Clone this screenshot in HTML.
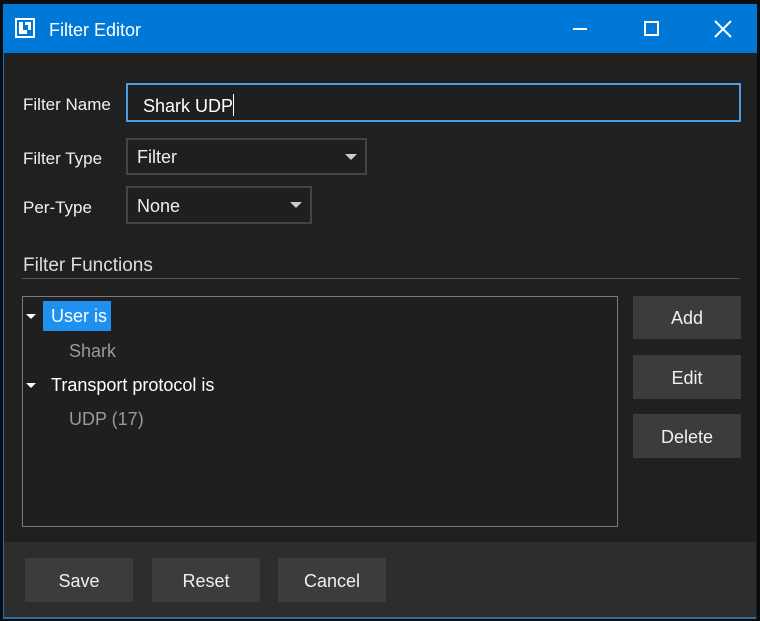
<!DOCTYPE html>
<html><head><style>
body{margin:0;width:760px;height:621px;background:#0c0c0c;font-family:"Liberation Sans",sans-serif;position:relative;overflow:hidden}
.a{position:absolute}
.win{left:3px;top:4px;width:753px;height:615px;background:#202020;border-left:1px solid #1d6fb8}
.tb{left:3px;top:4px;width:754px;height:49px;background:#0078d7}
.t{color:#fff;font-size:18px}
.lab{color:#f0f0f0;font-size:17px}
.box{box-sizing:border-box;background:#1f1f1f}
.btn{box-sizing:border-box;background:#3c3c3c;color:#f0f0f0;font-size:18px;text-align:center}
.arr{width:0;height:0;border-left:6px solid transparent;border-right:6px solid transparent;border-top:6px solid #ccc}
</style></head><body>
<div class="a win"></div>
<div class="a tb"></div>
<div class="a" style="left:15px;top:18px;width:20px;height:20px;box-sizing:border-box;border:2px solid #fff"></div>
<div class="a" style="left:19px;top:22px;width:4px;height:12px;background:#fff"></div>
<div class="a" style="left:19px;top:30px;width:8px;height:4px;background:#fff"></div>
<div class="a" style="left:25px;top:22px;width:6px;height:3px;background:#fff"></div>
<div class="a" style="left:28px;top:22px;width:3px;height:8px;background:#fff"></div>
<div class="a t" style="left:49px;top:20px">Filter Editor</div>
<div class="a" style="left:573px;top:28px;width:14px;height:2px;background:#fff"></div>
<div class="a" style="left:644px;top:21px;width:15px;height:15px;box-sizing:border-box;border:2px solid #fff"></div>
<svg class="a" style="left:714px;top:20px" width="18" height="18"><path d="M1 1L17 17M17 1L1 17" stroke="#fff" stroke-width="2"/></svg>
<div class="a" style="left:4px;top:617px;width:752px;height:2px;background:#2a6ea8"></div>

<div class="a lab" style="left:23px;top:95px">Filter Name</div>
<div class="a box" style="left:126px;top:83px;width:615px;height:39px;border:2px solid #4d9de0"></div>
<div class="a lab" style="left:143px;top:94px;color:#fff;font-size:18px">Shark UDP<span style="display:inline-block;width:1px;height:22px;background:#fff;vertical-align:-4px"></span></div>

<div class="a lab" style="left:23px;top:149px">Filter Type</div>
<div class="a box" style="left:126px;top:138px;width:241px;height:37px;border:2px solid #444"></div>
<div class="a lab" style="left:137px;top:147px;font-size:18px">Filter</div>
<div class="a arr" style="left:345px;top:154px"></div>

<div class="a lab" style="left:23px;top:198px">Per-Type</div>
<div class="a box" style="left:126px;top:186px;width:186px;height:38px;border:2px solid #444"></div>
<div class="a lab" style="left:137px;top:196px;font-size:18px">None</div>
<div class="a arr" style="left:290px;top:202px"></div>

<div class="a" style="left:23px;top:255px;color:#ddd;font-size:19px">Filter Functions</div>
<div class="a" style="left:22px;top:278px;width:718px;height:1px;background:#555"></div>

<div class="a box" style="left:22px;top:296px;width:596px;height:231px;border:1px solid #7a7a7a"></div>
<div class="a arr" style="left:26px;top:314px;border-top-color:#fff;border-left-width:5px;border-right-width:5px;border-top-width:5px"></div>
<div class="a" style="left:43px;top:301px;width:68px;height:30px;background:#1e90f0"></div>
<div class="a lab" style="left:51px;top:306px;color:#fff;font-size:18px">User is</div>
<div class="a lab" style="left:69px;top:341px;color:#9a9a9a;font-size:18px">Shark</div>
<div class="a arr" style="left:26px;top:383px;border-top-color:#fff;border-left-width:5px;border-right-width:5px;border-top-width:5px"></div>
<div class="a lab" style="left:51px;top:375px;color:#fff;font-size:18px">Transport protocol is</div>
<div class="a lab" style="left:69px;top:409px;color:#9a9a9a;font-size:18px">UDP (17)</div>

<div class="a btn" style="left:633px;top:296px;width:108px;height:43px;line-height:45px">Add</div>
<div class="a btn" style="left:633px;top:355px;width:108px;height:44px;line-height:46px">Edit</div>
<div class="a btn" style="left:633px;top:414px;width:108px;height:44px;line-height:46px">Delete</div>

<div class="a" style="left:4px;top:542px;width:752px;height:75px;background:#2d2d2d"></div>
<div class="a btn" style="left:25px;top:558px;width:108px;height:44px;line-height:46px">Save</div>
<div class="a btn" style="left:152px;top:558px;width:108px;height:44px;line-height:46px">Reset</div>
<div class="a btn" style="left:278px;top:558px;width:108px;height:44px;line-height:46px">Cancel</div>
</body></html>
